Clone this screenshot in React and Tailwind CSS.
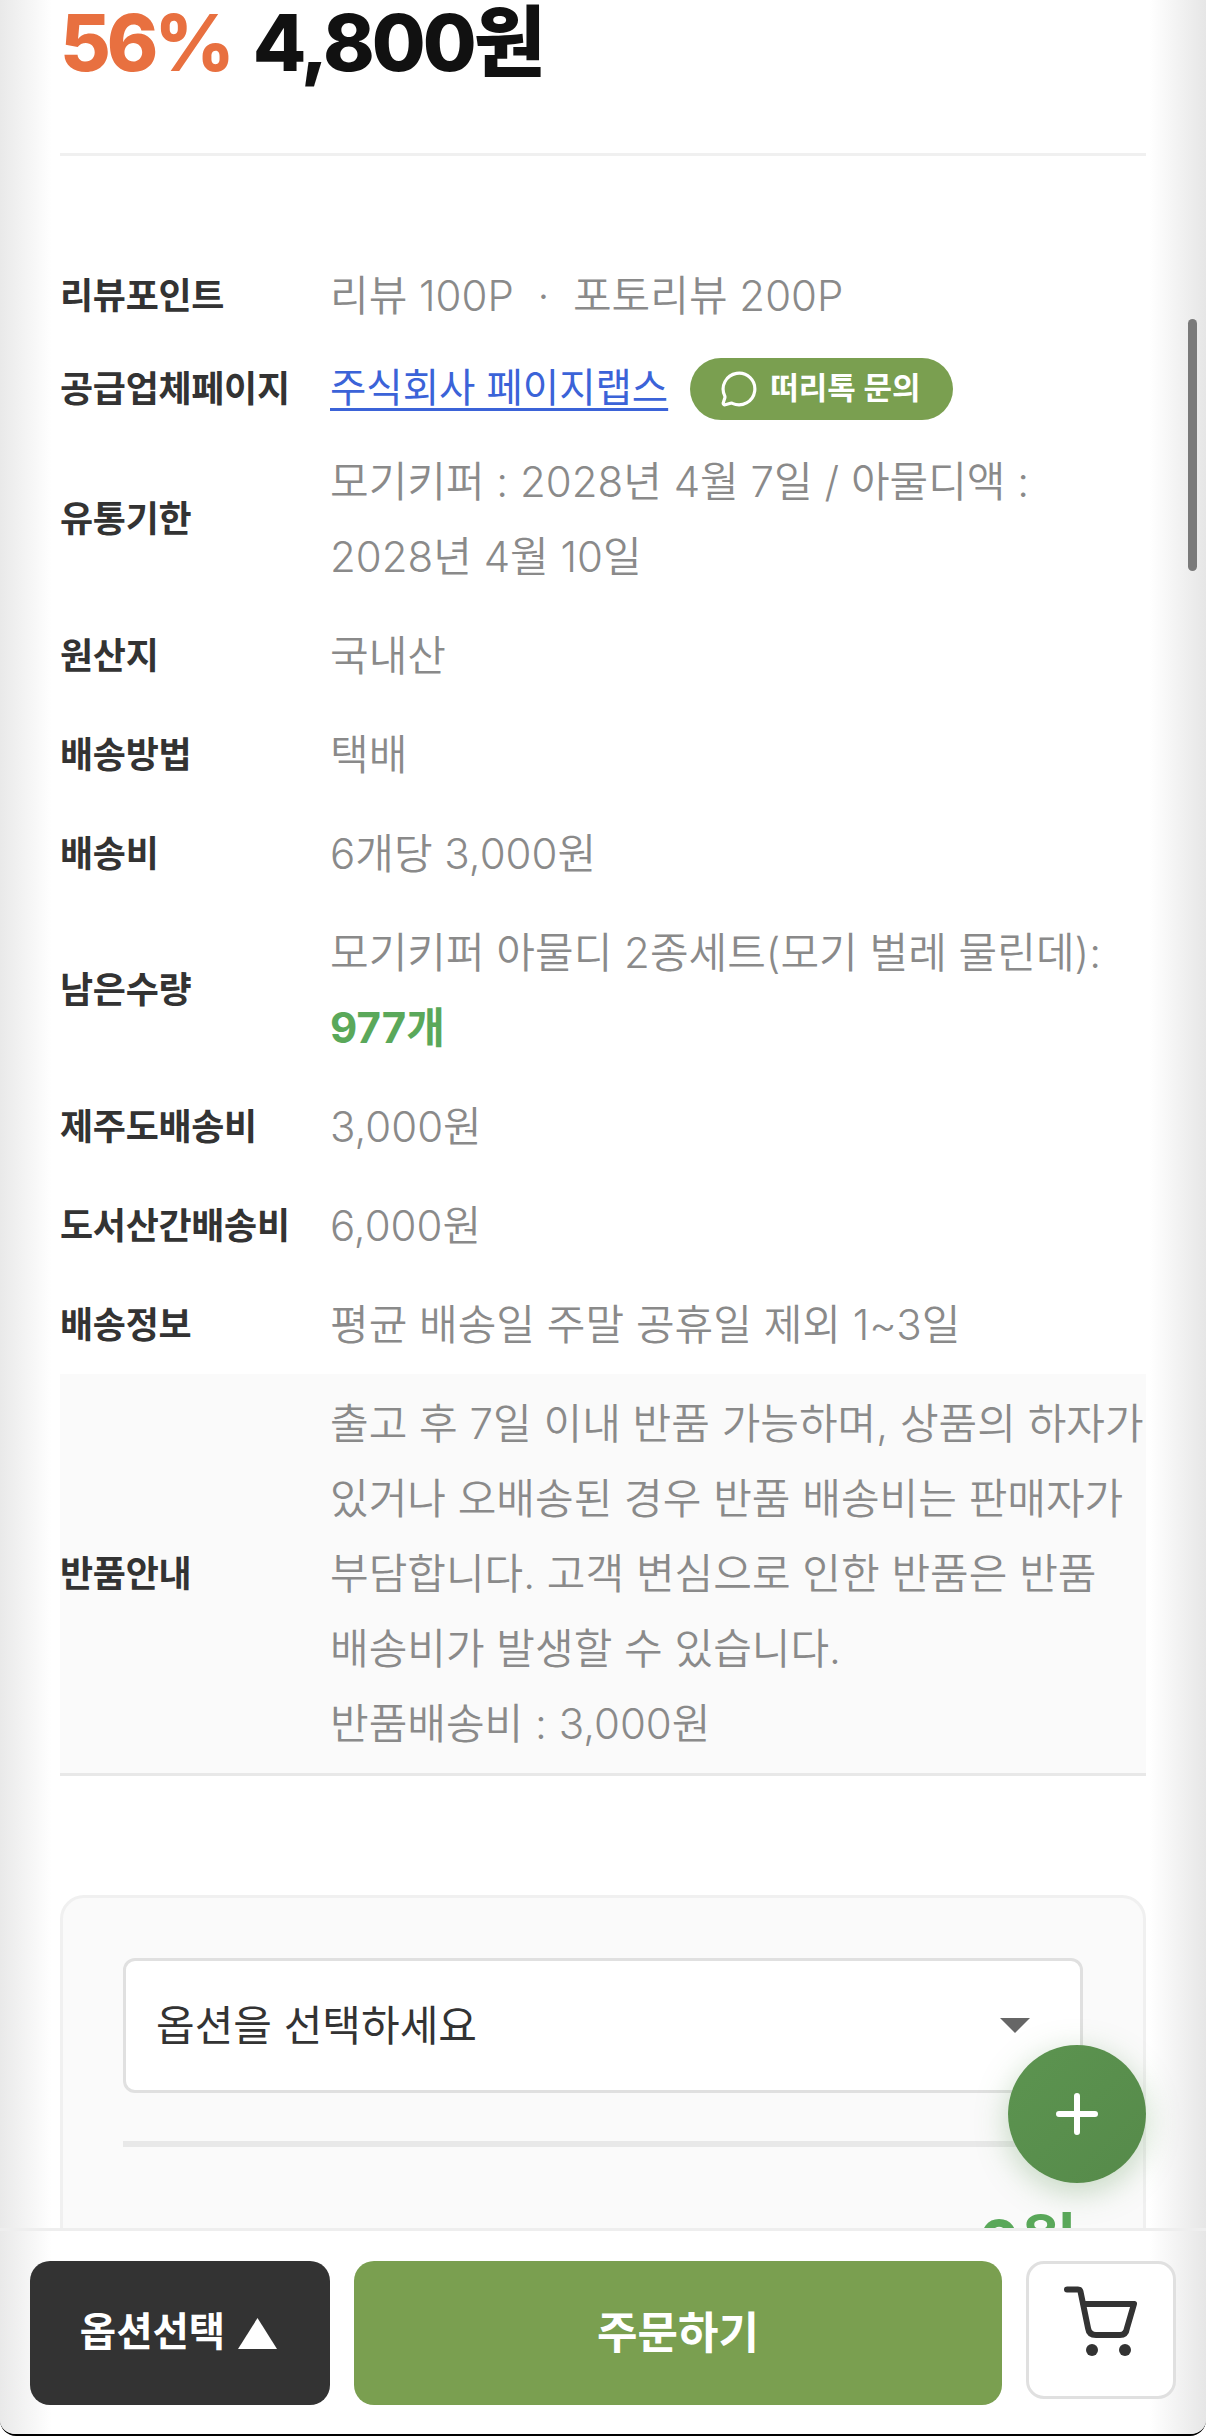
import React from 'react';
import { MessageCircle } from 'lucide-react';

const rows = [
  { label: '유통기한', lines: ['모기키퍼 : 2028년 4월 7일 / 아물디액 :', '2028년 4월 10일'] },
  { label: '원산지', lines: ['국내산'] },
  { label: '배송방법', lines: ['택배'] },
  { label: '배송비', lines: ['6개당 3,000원'] },
];

const rowsAfter = [
  { label: '제주도배송비', lines: ['3,000원'] },
  { label: '도서산간배송비', lines: ['6,000원'] },
  { label: '배송정보', lines: ['평균 배송일 주말 공휴일 제외 1~3일'] },
];

const returnLines = [
  '출고 후 7일 이내 반품 가능하며, 상품의 하자가',
  '있거나 오배송된 경우 반품 배송비는 판매자가',
  '부담합니다. 고객 변심으로 인한 반품은 반품',
  '배송비가 발생할 수 있습니다.',
  '반품배송비 : 3,000원',
];

const Label = ({ children }) => (
  <div className="w-[270px] shrink-0 text-[36px] font-bold text-[#333] tracking-[-0.3px]">{children}</div>
);

const Row = ({ label, children, className = '' }) => (
  <div className={`flex items-center py-3 ${className}`}>
    <Label>{label}</Label>
    <div className="flex-1 text-[42px] leading-[75px] font-[350] text-[#8a8a8a] whitespace-nowrap">{children}</div>
  </div>
);

const Lines = ({ lines }) => lines.map((line) => <div key={line}>{line}</div>);

export default function App() {
  return (
    <div
      className="relative h-[2436px] w-[1206px] overflow-hidden rounded-b-[16px] border-b-[2px] border-black bg-[linear-gradient(90deg,#e9e9e9_0px,#ffffff_52px,#ffffff_1150px,#e6e6e6_1206px)]"
      style={{ fontFamily: 'Inter, "Noto Sans CJK KR", sans-serif' }}
    >
      <div className="px-[60px]">
        {/* price */}
        <div className="flex h-[153px] items-start gap-[22px] pt-[3px] text-[78px] leading-[80px] font-extrabold">
          <span className="tracking-[-4px] text-[#e87040]">56%</span>
          <span className="tracking-[-3px] text-[#111]">4,800원</span>
        </div>
        <div className="h-[3px] bg-[#f0f0f0]" />

        {/* detail rows */}
        <div className="mt-[90px]">
          <Row label="리뷰포인트">리뷰 100P &nbsp;·&nbsp; 포토리뷰 200P</Row>
          <div className="flex h-[87px] items-center">
            <Label>공급업체페이지</Label>
            <a className="text-[39.5px] text-[#3b63d8] underline decoration-[3px] underline-offset-[6px] whitespace-nowrap">주식회사 페이지랩스</a>
            <div className="ml-[22px] flex h-[62px] items-center gap-[12px] rounded-full bg-[#7a9f50] pr-[32px] pl-[30px] text-[31px] font-semibold text-white whitespace-nowrap">
              <MessageCircle size={38} strokeWidth={2} />
              <span>떠리톡 문의</span>
            </div>
          </div>
          {rows.map((r) => (
            <Row key={r.label} label={r.label}>
              <Lines lines={r.lines} />
            </Row>
          ))}
          <Row label="남은수량">
            <div>모기키퍼 아물디 2종세트(모기 벌레 물린데):</div>
            <div className="font-bold text-[#5aa85a]">977개</div>
          </Row>
          {rowsAfter.map((r) => (
            <Row key={r.label} label={r.label}>
              <Lines lines={r.lines} />
            </Row>
          ))}
          <Row label="반품안내" className="border-b-[3px] border-[#e8e8e8] bg-[#fafafa]">
            <Lines lines={returnLines} />
          </Row>
        </div>

        {/* option card */}
        <div className="mt-[119px] rounded-[24px] border-[3px] border-[#f0f0f0] bg-[#fafafa] px-[60px] pt-[60px] pb-[60px]">
          <div className="flex h-[135px] items-center justify-between rounded-[12px] border-[3px] border-[#e0e0e0] bg-white pr-[50px] pl-[30px]">
            <span className="text-[42px] text-[#333]">옵션을 선택하세요</span>
            <svg width="30" height="15" viewBox="0 0 30 15"><path d="M0 0H30L15 15Z" fill="#666" /></svg>
          </div>
          <div className="mt-[48px] h-[6px] bg-[#e8e8e8]" />
          <div className="mt-[60px] pr-[6px] text-right text-[62px] leading-[72px] font-bold text-[#5aa85a]">0원</div>
        </div>
      </div>

      {/* floating add button */}
      <div className="absolute top-[2045px] left-[1008px] flex h-[138px] w-[138px] items-center justify-center rounded-full bg-[linear-gradient(135deg,#5c9450,#568a4a)] shadow-[0_8px_32px_rgba(90,145,80,0.35)]">
        <svg width="42" height="42" viewBox="0 0 42 42" fill="none" stroke="#fff" strokeWidth="6" strokeLinecap="round">
          <path d="M3 21H39M21 3V39" />
        </svg>
      </div>

      {/* scrollbar */}
      <div className="absolute top-[319px] left-[1188px] h-[252px] w-[9px] rounded-full bg-[#7a7a7a]" />

      {/* bottom bar */}
      <div className="absolute inset-x-0 top-[2228px] bottom-0 flex items-start gap-6 border-t-[3px] border-[#eeeeee] bg-[linear-gradient(90deg,#e9e9e9_0px,#ffffff_52px,#ffffff_1150px,#e6e6e6_1206px)] pt-[30px] pr-[30px] pl-[30px]">
        <button className="flex h-[144px] w-[300px] items-center justify-center gap-[13px] rounded-[20px] bg-[#333] pr-[3px] text-[39.5px] font-bold text-white">
          <span>옵션선택</span>
          <svg width="39" height="31" viewBox="0 0 39 31"><path d="M19.5 0L39 31H0Z" fill="#fff" /></svg>
        </button>
        <button className="flex h-[144px] flex-1 items-center justify-center rounded-[20px] bg-[#7a9f50] text-[44px] font-bold text-white">
          주문하기
        </button>
        <button className="flex h-[138px] w-[150px] items-center justify-center rounded-[18px] border-[3px] border-[#e0e0e0] bg-white">
          <svg width="90" height="90" viewBox="0 0 90 90" fill="none" stroke="#333" strokeWidth="6" strokeLinecap="round" strokeLinejoin="round">
            <path d="M11 4.5H22q2 0 2.5 2L32 43q1 7 8 7H64q6 0 7-7L78 19H27" />
            <circle cx="36" cy="65" r="6" fill="#333" stroke="none" />
            <circle cx="69" cy="65" r="6" fill="#333" stroke="none" />
          </svg>
        </button>
      </div>
    </div>
  );
}
